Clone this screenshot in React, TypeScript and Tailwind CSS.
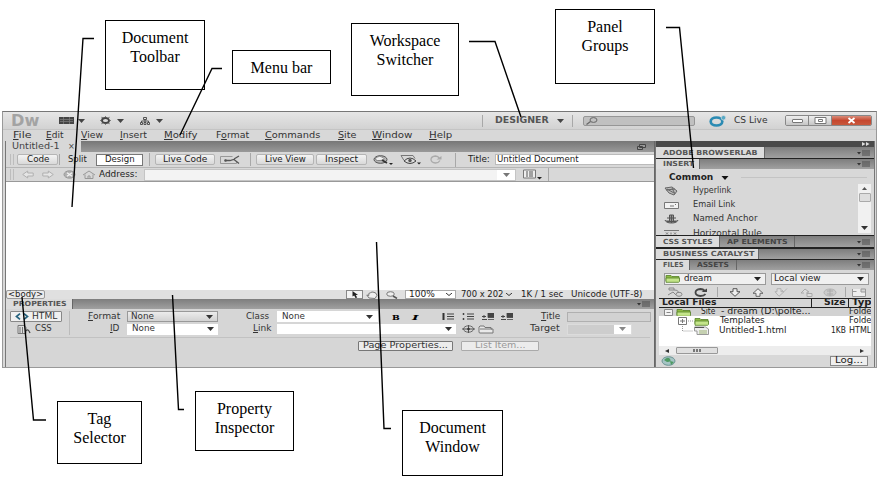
import React, { useLayoutEffect, useRef, useState } from 'react';
import clsx from 'clsx';

interface FitProps {
  w: number;
  children: React.ReactNode;
  className?: string;
}

// Stretches a label horizontally so that it fills exactly w pixels
const Fit: React.FC<FitProps> = ({ w, children, className }) => {
  const ref = useRef<HTMLSpanElement>(null);
  const [scale, setScale] = useState(1);

  useLayoutEffect(() => {
    if (ref.current) setScale(w / ref.current.offsetWidth);
  }, [w]);

  return (
    <span className={clsx('block shrink-0 leading-[10px]', className)} style={{ width: w }}>
      <span
        ref={ref}
        className="inline-block origin-left whitespace-pre align-top"
        style={{ transform: `scaleX(${scale})` }}
      >
        {children}
      </span>
    </span>
  );
};

const Caret = ({ className }: { className?: string }) => (
  <svg className={clsx('h-[4px] w-[7px] shrink-0', className)} viewBox="0 0 7 4">
    <path d="M0 0h7L3.5 4z" fill="currentColor" />
  </svg>
);

const Divider = ({ className }: { className?: string }) => (
  <div className={clsx('w-px shrink-0 bg-[#a8a8a8]', className)} />
);

const Grip = () => (
  <div className="ml-[4px] h-[11px] w-[4px] shrink-0 border-x border-[#bdbdbd]" />
);

const Folder = ({ className }: { className?: string }) => (
  <svg className={clsx('h-[9px] w-[16px] shrink-0', className)} viewBox="0 0 16 9">
    <path d="M1 7V1.500h5l1 1h7V7z" fill="#8fbb45" stroke="#55802a" strokeWidth=".8" />
    <path d="M1 8.300V4h13.500v3.500l-1 .8z" fill="#c4e58a" stroke="#55802a" strokeWidth=".8" />
  </svg>
);

const PanelMenu = () => (
  <svg className="mr-[4px] ml-auto h-[6px] w-[13px] shrink-0" viewBox="0 0 13 6">
    <path d="M0 2h4L2 4.500z" fill="#333" />
    <path d="M5 1h8M5 3h8M5 5h8" stroke="#4c4c4c" strokeWidth="1" />
  </svg>
);

const TitleBar = () => (
  <div className="flex h-[17px] shrink-0 items-center bg-gradient-to-b from-[#e6e6e6] to-[#d2d2d2] text-[#444]">
    <Fit w={28} className="ml-[8px] text-[15px] font-bold text-[#a3a3a3]">Dw</Fit>
    <svg className="ml-[20px] h-[7px] w-[15px] shrink-0" viewBox="0 0 15 7">
      <path d="M0 0h15v7H0z" fill="#444" />
      <path d="M4.500 0v7M10.500 0v7M1 2.500h13M1 4.500h13" stroke="#777" strokeWidth=".8" />
    </svg>
    <Caret className="ml-[4px]" />
    <svg className="ml-[15px] h-[9px] w-[11px] shrink-0" viewBox="0 0 11 9">
      <ellipse cx="5.500" cy="4.500" rx="3.500" ry="2.500" fill="none" stroke="#444" strokeWidth="1.900" />
      <path d="M5.500 .3v1.500M5.500 7.200v1.500M.3 4.500h1.500M9.200 4.500h1.500M1.500 1.300l1.500 1M8 6.700l1.500 1M9.500 1.300L8 2.300M3 6.700l-1.500 1" stroke="#555" />
    </svg>
    <Caret className="ml-[6px]" />
    <svg className="ml-[16px] h-[8px] w-[10px] shrink-0" viewBox="0 0 10 8">
      <path d="M3.500.5h3v2h-3zM.5 5.500h2v2h-2zM4 5.500h2v2H4zM7.500 5.500h2v2h-2zM5 2.500v3M1.500 5.500V4h7v1.500" fill="none" stroke="#444" strokeWidth=".9" />
    </svg>
    <Caret className="ml-[6px]" />
    <Divider className="ml-[319px] h-[12px]" />
    <Fit w={54} className="ml-[12px] font-bold text-[#555]">DESIGNER</Fit>
    <Caret className="ml-[8px] h-[3px]" />
    <Divider className="ml-[8px] h-[12px]" />
    <div className="ml-[10px] flex h-[10px] w-[112px] shrink-0 items-center rounded-[2px] border border-[#969696] bg-[#c0c0c0]">
      <svg className="ml-[1px] h-[8px] w-[13px]" viewBox="0 0 13 8">
        <ellipse cx="8.500" cy="3" rx="3.500" ry="2.400" fill="none" stroke="#666" />
        <path d="M5.500 4.600L1.500 7.500" stroke="#666" strokeWidth="1.200" />
      </svg>
    </div>
    <svg className="ml-[14px] h-[12px] w-[18px] shrink-0" viewBox="0 0 18 12">
      <ellipse cx="7.500" cy="6.500" rx="5.800" ry="4" fill="none" stroke="#2b8bb3" strokeWidth="2.700" />
      <circle cx="14.500" cy="2.800" r="2.300" fill="#57a9c5" stroke="#dedede" strokeWidth=".7" />
    </svg>
    <Fit w={34} className="ml-[7px] text-[#333]">CS Live</Fit>
    <div className="ml-[17px] flex h-[11px] shrink-0 overflow-hidden rounded-[2px] border border-[#888] text-[#555]">
      <div className="flex w-[23px] items-center justify-center border-r border-[#888] bg-gradient-to-b from-[#eee] to-[#c5c5c5]">
        <div className="h-[4px] w-[11px] rounded-[1px] border border-[#777] bg-white" />
      </div>
      <div className="flex w-[23px] items-center justify-center border-r border-[#888] bg-gradient-to-b from-[#eee] to-[#c5c5c5]">
        <svg className="h-[7px] w-[13px]" viewBox="0 0 13 7">
          <path d="M1 .5h11v6H1z" fill="#fff" stroke="#777" />
          <path d="M4.500 2.500h4v2h-4z" fill="none" stroke="#777" />
        </svg>
      </div>
      <div className="flex w-[39px] items-center justify-center bg-gradient-to-b from-[#d98a78] via-[#c5472f] to-[#c8583c]">
        <svg className="h-[7px] w-[9px]" viewBox="0 0 9 7">
          <path d="M1.500 1l6 5M7.500 1l-6 5" stroke="#fff" strokeWidth="1.800" />
        </svg>
      </div>
    </div>
  </div>
);

const menus = [
  { key: 'F', rest: 'ile', w: 18, gap: 'ml-[10px]' },
  { key: 'E', rest: 'dit', w: 18, gap: 'ml-[15px]' },
  { key: 'V', rest: 'iew', w: 22, gap: 'ml-[17px]' },
  { key: 'I', rest: 'nsert', w: 27, gap: 'ml-[17px]' },
  { key: 'M', rest: 'odify', w: 34, gap: 'ml-[17px]' },
  { pre: 'F', key: 'o', rest: 'rmat', w: 33, gap: 'ml-[18px]' },
  { key: 'C', rest: 'ommands', w: 55, gap: 'ml-[16px]' },
  { key: 'S', rest: 'ite', w: 18, gap: 'ml-[18px]' },
  { key: 'W', rest: 'indow', w: 41, gap: 'ml-[16px]' },
  { key: 'H', rest: 'elp', w: 23, gap: 'ml-[16px]' },
];

const MenuBar = () => (
  <div className="flex h-[12px] shrink-0 items-center border-t border-[#c4c4c4] bg-[#d8d8d8] text-[#333]">
    {menus.map((m) => (
      <Fit key={m.key + m.rest} w={m.w} className={m.gap}>
        {m.pre}<u>{m.key}</u>{m.rest}
      </Fit>
    ))}
  </div>
);

const button =
  'flex shrink-0 items-center justify-center rounded-[2px] border border-[#b5b5b5] bg-gradient-to-b from-[#f4f4f4] to-[#d9d9d9] h-[11px]';

const DocumentToolbar = () => (
  <div className="flex h-[16px] shrink-0 items-center border-b border-[#b5b5b5] bg-[#d8d8d8]">
    <Grip />
    <div className={clsx(button, 'ml-[3px] w-[41px]')}><Fit w={22}>Code</Fit></div>
    <Divider className="ml-[1px] h-[11px]" />
    <Fit w={19} className="ml-[8px]">Split</Fit>
    <div className="ml-[9px] flex h-[12px] w-[47px] shrink-0 items-center justify-center border border-[#777] bg-white">
      <Fit w={30}>Design</Fit>
    </div>
    <Divider className="ml-[6px] h-[13px]" />
    <div className={clsx(button, 'ml-[5px] w-[60px]')}><Fit w={44}>Live Code</Fit></div>
    <svg className="ml-[5px] h-[10px] w-[22px] shrink-0" viewBox="0 0 22 10">
      <path d="M.5 1.500h12M.5 1.500v7h16v-2" fill="none" stroke="#999" />
      <path d="M5 5.500h5l5-1.500M14 4l5-3M14 4.500l5 4" fill="none" stroke="#555" strokeWidth="1.300" />
      <circle cx="5.500" cy="5.500" r="1.300" fill="#555" />
    </svg>
    <Divider className="ml-[8px] h-[13px]" />
    <div className={clsx(button, 'ml-[5px] w-[58px]')}><Fit w={41}>Live View</Fit></div>
    <div className={clsx(button, 'ml-[2px] w-[51px]')}><Fit w={33}>Inspect</Fit></div>
    <svg className="ml-[6px] h-[10px] w-[20px] shrink-0" viewBox="0 0 20 10">
      <ellipse cx="7.500" cy="4.500" rx="6.500" ry="3.800" fill="#b7b7b7" stroke="#555" />
      <path d="M3 2.500q4-2.500 7 0t-3 3-4-3" fill="#eee" stroke="#666" strokeWidth=".7" />
      <path d="M9 5l5 3" stroke="#333" strokeWidth="1.800" />
      <path d="M16 8h4l-2 2z" fill="#222" />
    </svg>
    <svg className="ml-[7px] h-[11px] w-[21px] shrink-0" viewBox="0 0 21 11">
      <path d="M4 6.500L1 1.500h12l2 3" fill="none" stroke="#777" />
      <path d="M4 7q6-6 12 0-6 5-12 0z" fill="#ddd" stroke="#444" />
      <circle cx="10" cy="6.500" r="1.700" fill="#555" />
      <path d="M17 8.500h4l-2 2z" fill="#222" />
    </svg>
    <svg className="ml-[9px] h-[9px] w-[12px] shrink-0" viewBox="0 0 12 9">
      <path d="M10 5.500Q8.500 8 5.500 8 1 7.500 1 4.500T5.500 1Q8 1 9.500 3.300" fill="none" stroke="#aaa" strokeWidth="1.300" />
      <path d="M11.500 1v3.500h-5z" fill="#aaa" />
    </svg>
    <Divider className="ml-[13px] h-[14px]" />
    <Fit w={22} className="ml-[12px]">Title:</Fit>
    <div className="ml-[5px] flex h-[11px] flex-1 items-center border border-r-0 border-[#bbb] bg-white pl-[1px]">
      <Fit w={82}>Untitled Document</Fit>
    </div>
  </div>
);

const AddressBar = () => (
  <div className="flex h-[14px] shrink-0 items-center border-b border-[#999] bg-[#d8d8d8]">
    <Grip />
    <svg className="ml-[8px] h-[9px] w-[12px] shrink-0" viewBox="0 0 12 9">
      <path d="M.7 4.500l5-3.500v2h5.500v3H5.700v2z" fill="#e5e5e5" stroke="#b0b0b0" />
    </svg>
    <svg className="ml-[8px] h-[9px] w-[12px] shrink-0" viewBox="0 0 12 9">
      <path d="M11.300 4.500l-5-3.500v2H.8v3h5.500v2z" fill="#e5e5e5" stroke="#b0b0b0" />
    </svg>
    <svg className="ml-[9px] h-[9px] w-[13px] shrink-0" viewBox="0 0 13 9">
      <ellipse cx="6.500" cy="4.500" rx="5.500" ry="3.700" fill="#b0b0b0" stroke="#999" />
      <path d="M4 2.700l5 3.600M9 2.700L4 6.300" stroke="#f3f3f3" strokeWidth="1.400" />
    </svg>
    <svg className="ml-[6px] h-[9px] w-[14px] shrink-0" viewBox="0 0 14 9">
      <path d="M1 5l6-4 6 4M3 4.500v4h8v-4M6 8.500V6h2v2.500" fill="none" stroke="#999" />
    </svg>
    <Fit w={39} className="ml-[3px]">Address:</Fit>
    <div className="ml-[6px] flex h-[12px] w-[372px] shrink-0 items-center justify-end border border-[#c4c4c4] bg-[#f3f3f3]">
      <div className="flex h-full w-[18px] items-center justify-center bg-white">
        <Caret className="h-[2px] w-[5px] text-[#777]" />
      </div>
    </div>
    <svg className="ml-[7px] h-[11px] w-[19px] shrink-0" viewBox="0 0 19 11">
      <path d="M.5 1h12v8H.5z" fill="#eee" stroke="#777" />
      <path d="M3 3h2M3 5h2M3 7h2M6 3h4M6 5h4M6 7h4" stroke="#555" />
      <path d="M14 8h5l-2.500 2.500z" fill="#222" />
    </svg>
    <Divider className="ml-[6px] h-[13px] bg-[#888]" />
  </div>
);

const TagBar = () => (
  <div className="flex h-[9px] shrink-0 items-center bg-[#e0e0e0] text-[#222]">
    <div className="flex h-[9px] w-[39px] shrink-0 items-center justify-center rounded-[2px] border border-[#999] bg-[#ececec]">
      <Fit w={35}>&lt;body&gt;</Fit>
    </div>
    <div className="ml-[301px] flex h-[9px] w-[17px] shrink-0 items-center justify-center border border-[#888] bg-[#f3f3f3]">
      <svg className="h-[7px] w-[8px]" viewBox="0 0 8 7">
        <path d="M1.500 0l5.500 4H4.700l1.500 2.500-1.700.5L3.200 4.500l-1.700 1z" fill="#222" />
      </svg>
    </div>
    <svg className="ml-[3px] h-[8px] w-[13px] shrink-0" viewBox="0 0 13 8">
      <path d="M3 7L.8 4l2 .5V2.500l1.700-.8L6 1l2 .3 2 1 1 2-2 3.200z" fill="#eee" stroke="#777" />
    </svg>
    <svg className="ml-[7px] h-[8px] w-[12px] shrink-0" viewBox="0 0 12 8">
      <ellipse cx="4.500" cy="3" rx="3.800" ry="2.300" fill="#eee" stroke="#777" />
      <path d="M7 5l4 2.500" stroke="#555" strokeWidth="1.500" />
    </svg>
    <div className="ml-[7px] flex h-[9px] w-[51px] shrink-0 items-center border border-[#aaa] bg-white pl-[3px]">
      <Fit w={26}>100%</Fit>
      <svg className="ml-[11px] h-[3px] w-[6px]" viewBox="0 0 6 3"><path d="M0 0l3 2.500L6 0" fill="none" stroke="#333" /></svg>
    </div>
    <Fit w={42} className="ml-[5px]">700 x 202</Fit>
    <svg className="ml-[3px] h-[3px] w-[6px]" viewBox="0 0 6 3"><path d="M0 0l3 2.500L6 0" fill="none" stroke="#333" /></svg>
    <Fit w={42} className="ml-[9px]">1K / 1 sec</Fit>
    <Fit w={72} className="ml-[8px]">Unicode (UTF-8)</Fit>
  </div>
);

const ListIcon = ({ variant, className }: { variant: number; className?: string }) => (
  <svg className={clsx('h-[7px] w-[12px] shrink-0', className)} viewBox="0 0 12 7">
    {variant === 0 && <path d="M1.500 0v7" stroke="#333" strokeWidth="2" />}
    {variant === 1 && <path d="M1.500 0v2M1.500 5v2" stroke="#444" strokeWidth="1.500" />}
    {variant > 1 && <path d="M0 3.500h4M2 2v3M0 6.500h5" stroke="#444" />}
    {variant > 1 ? (
      <path d="M6 0h6v4.500H6zM6 6.500h6" fill="#444" stroke="#444" strokeWidth=".8" />
    ) : (
      <path d="M5 1h7M5 3.500h7M5 6h7" stroke="#444" />
    )}
  </svg>
);

const PropertyInspector = () => (
  <div className="flex flex-1 flex-col bg-[#d6d6d6] text-[#333]">
    <div className="flex h-[14px] items-center pt-[1px]">
      <div className="ml-[4px] flex h-[11px] w-[52px] shrink-0 items-center rounded-[1px] border border-[#888] bg-[#f0f0f0] pl-[4px]">
        <svg className="h-[7px] w-[14px]" viewBox="0 0 14 7">
          <path d="M5 .7L1.500 3.500 5 6.300M9 .7l3.500 2.800L9 6.300" fill="none" stroke="#26637f" strokeWidth="1.700" />
        </svg>
        <Fit w={25} className="ml-[3px]">HTML</Fit>
      </div>
      <Divider className="ml-[7px] h-[12px] bg-[#bbb]" />
      <Fit w={32} className="ml-[18px]"><u>F</u>ormat</Fit>
      <div className="ml-[7px] flex h-[11px] w-[91px] shrink-0 items-center border border-[#999] bg-gradient-to-b from-[#ececec] to-[#d2d2d2] pl-[3px]">
        <Fit w={23}>None</Fit>
        <Caret className="mr-[4px] ml-auto h-[3px]" />
      </div>
      <Fit w={23} className="ml-[28px]">Class</Fit>
      <div className="ml-[8px] flex h-[11px] w-[101px] shrink-0 items-center bg-white pl-[5px]">
        <Fit w={23}>None</Fit>
        <Caret className="mr-[5px] ml-auto h-[3px]" />
      </div>
      <Fit w={8} className="ml-[14px] font-[DejaVu_Serif] font-black text-black">B</Fit>
      <Fit w={7} className="ml-[12px] font-[DejaVu_Serif] font-bold text-black italic">I</Fit>
      <ListIcon variant={0} className="ml-[23px]" />
      <ListIcon variant={1} className="ml-[8px]" />
      <ListIcon variant={2} className="ml-[8px]" />
      <ListIcon variant={3} className="ml-[7px]" />
      <Fit w={19} className="ml-[28px]"><u>T</u>itle</Fit>
      <div className="ml-[7px] h-[10px] w-[84px] shrink-0 border border-[#b0b0b0] bg-[#d2d2d2]" />
    </div>
    <div className="flex h-[12px] items-center">
      <svg className="ml-[11px] h-[9px] w-[15px] shrink-0" viewBox="0 0 15 9">
        <path d="M1 .5h6l2 2v6H1zM3 2v6M5.500 2v6" fill="#ddd" stroke="#777" />
        <path d="M9 6q2-3 4 2" fill="none" stroke="#444" strokeWidth="1.300" />
      </svg>
      <Fit w={17} className="ml-[3px]">CSS</Fit>
      <Divider className="ml-[17px] h-[12px] bg-[#bbb]" />
      <Fit w={10} className="ml-[40px]"><u>I</u>D</Fit>
      <div className="ml-[7px] flex h-[11px] w-[91px] shrink-0 items-center bg-white pl-[5px]">
        <Fit w={23}>None</Fit>
        <Caret className="mr-[4px] ml-auto h-[3px]" />
      </div>
      <Fit w={18} className="ml-[35px]"><u>L</u>ink</Fit>
      <div className="ml-[6px] flex h-[10px] w-[179px] shrink-0 items-center bg-white">
        <Caret className="mr-[4px] ml-auto h-[3px]" />
      </div>
      <svg className="ml-[6px] h-[8px] w-[13px] shrink-0" viewBox="0 0 13 8">
        <ellipse cx="6.500" cy="4" rx="5" ry="3.200" fill="none" stroke="#666" />
        <path d="M0 4h13M6.500 0v8" stroke="#555" />
        <circle cx="6.500" cy="4" r="1.300" fill="#333" />
      </svg>
      <svg className="ml-[3px] h-[9px] w-[16px] shrink-0" viewBox="0 0 16 9">
        <path d="M1 7.500V2l1-1h4l1 1.500h6V4h2v4H2zM2 4h12" fill="#e9e9e9" stroke="#777" />
      </svg>
      <Fit w={30} className="ml-[36px]">Target</Fit>
      <div className="ml-[7px] flex h-[11px] w-[65px] shrink-0 items-center justify-end border border-[#dcdcdc] bg-[#cdcdcd]">
        <div className="flex h-full w-[17px] items-center justify-center bg-white">
          <Caret className="h-[2px] w-[5px] text-[#888]" />
        </div>
      </div>
    </div>
    <div className="mx-[4px] mt-[2px] h-px bg-[#c2c2c2]" />
    <div className="mt-[2px] flex h-[11px] items-center">
      <div className="ml-[352px] flex h-[10px] w-[95px] shrink-0 items-center justify-center rounded-[1px] border border-[#777] bg-[#ececec]">
        <Fit w={85}>Page Properties...</Fit>
      </div>
      <div className="ml-[8px] flex h-[10px] w-[78px] shrink-0 items-center justify-center rounded-[1px] border border-[#aaa] bg-[#ececec] text-[#999]">
        <Fit w={50}>List Item...</Fit>
      </div>
    </div>
  </div>
);

interface TabStripProps {
  tabs: { label: string; w: number; text: number }[];
  className?: string;
}

const TabStrip: React.FC<TabStripProps> = ({ tabs, className }) => (
  <div className={clsx('flex shrink-0 items-stretch bg-gradient-to-b from-[#7e7e7e] to-[#a0a0a0] text-[7px] font-bold', className)}>
    {tabs.map((tab, i) => (
      <div
        key={tab.label}
        className={clsx(
          'flex shrink-0 items-center border-r border-[#666] pl-[7px]',
          i === 0 ? 'bg-[#dcdcdc] text-[#555]' : 'text-[#444]'
        )}
        style={{ width: tab.w }}
      >
        <Fit w={tab.text}>{tab.label}</Fit>
      </div>
    ))}
    <div className="flex flex-1 items-center"><PanelMenu /></div>
  </div>
);

const insertItems = [
  {
    label: 'Hyperlink', w: 38,
    icon: <path d="M1 2l7-1 5 4-3 4-5-2zM3 3l7 4M2 4l9-1M8 2l3 6" fill="#bbb" stroke="#666" />,
  },
  {
    label: 'Email Link', w: 42,
    icon: <path d="M.5 2.500h14v6H.5zM6 6h4M11 4.500h1" fill="#f2f2f2" stroke="#777" />,
  },
  {
    label: 'Named Anchor', w: 64,
    icon: <path d="M5.500 1h4v6h-4zM3 4h9M1 6q1 3 6.500 3T14 6M7.500 1v8M3 7.500h9" fill="#999" stroke="#555" />,
  },
  {
    label: 'Horizontal Rule', w: 69,
    icon: <path d="M0 1.500h15M0 8h15M2 3.500l2 2M4 3.500l-2 2M7 3.500v2M10 3.500l2 2M12 3.500l-2 2" fill="none" stroke="#777" />,
  },
];

const InsertPanel = () => (
  <div className="flex h-[66px] shrink-0 flex-col overflow-hidden bg-[#d8d8d8] text-[#333]">
    <div className="flex h-[15px] shrink-0 items-center pt-[2px]">
      <Fit w={44} className="ml-[13px] font-bold text-[#222]">Common</Fit>
      <Caret className="ml-[8px] h-[4px] w-[8px] text-[#111]" />
      <div className="ml-[12px] h-px w-[126px] bg-[#c4c4c4]" />
    </div>
    <div className="flex min-h-0 flex-1">
      <div className="flex flex-1 flex-col overflow-hidden">
        {insertItems.map((item) => (
          <div key={item.label} className="flex h-[14.200px] shrink-0 items-center">
            <svg className="ml-[8px] h-[10px] w-[15px] shrink-0" viewBox="0 0 15 10">{item.icon}</svg>
            <Fit w={item.w} className="ml-[14px]">{item.label}</Fit>
          </div>
        ))}
      </div>
      <div className="mr-[3px] flex h-[49px] w-[13px] flex-col items-center bg-[#f1f1f1] py-[3px]">
        <svg className="h-[3px] w-[5px]" viewBox="0 0 5 3"><path d="M0 3l2.500-3L5 3z" fill="#555" /></svg>
        <div className="mt-[3px] h-[9px] w-[12px] rounded-[1px] border border-[#aaa] bg-[#dedede]" />
        <Caret className="mt-auto h-[3px] w-[5px] text-[#333]" />
      </div>
    </div>
  </div>
);

const FilesPanel = () => (
  <div className="flex flex-1 flex-col bg-[#d8d8d8] text-[#222]">
    <div className="flex h-[16px] shrink-0 items-center pt-[1px]">
      <div className="ml-[8px] flex h-[12px] w-[102px] items-center border border-[#999] bg-[#f0f0f0]">
        <Folder />
        <Fit w={28} className="ml-[3px]">dream</Fit>
        <Caret className="mr-[4px] ml-auto h-[3px]" />
      </div>
      <div className="ml-[5px] flex h-[12px] w-[98px] items-center border border-[#999] bg-[#f0f0f0] pl-[2px]">
        <Fit w={47}>Local view</Fit>
        <Caret className="mr-[4px] ml-auto h-[3px]" />
      </div>
    </div>
    <div className="flex h-[12px] shrink-0 items-center">
      <svg className="ml-[11px] h-[10px] w-[16px] shrink-0" viewBox="0 0 16 10">
        <path d="M2 1h5v2H2zM1 8l5-3 3 3M7 3q5 0 4 3" fill="none" stroke="#888" />
        <ellipse cx="12" cy="7.300" rx="3" ry="2" fill="none" stroke="#888" />
      </svg>
      <svg className="ml-[11px] h-[9px] w-[14px] shrink-0" viewBox="0 0 14 9">
        <path d="M11.500 6Q10 8 6.500 8 1.500 7.500 1.500 4.500T6.500 1Q9 1 11 3" fill="none" stroke="#444" strokeWidth="1.800" />
        <path d="M13 .5V4H7.500z" fill="#444" />
      </svg>
      <Divider className="ml-[9px] h-[10px] bg-[#999]" />
      <svg className="ml-[11px] h-[9px] w-[12px] shrink-0" viewBox="0 0 12 9">
        <path d="M4 .7h4v3h3L6 8.300 1 3.700h3z" fill="#eee" stroke="#555" />
      </svg>
      <svg className="ml-[11px] h-[9px] w-[12px] shrink-0" viewBox="0 0 12 9">
        <path d="M4 8.300h4v-3h3L6 .7 1 5.300h3z" fill="#eee" stroke="#666" />
      </svg>
      <svg className="ml-[10px] h-[9px] w-[14px] shrink-0" viewBox="0 0 14 9">
        <path d="M3 .7h4v3h3L5 8.300 1 3.700h2zM8 2l1.500 2L13 .5" fill="#ddd" stroke="#b2b2b2" />
      </svg>
      <svg className="ml-[12px] h-[9px] w-[13px] shrink-0" viewBox="0 0 13 9">
        <path d="M4 5H1L5 1l4 3H7v2M7 5.500h5v3H7z" fill="#ddd" stroke="#aaa" />
      </svg>
      <svg className="ml-[10px] h-[9px] w-[14px] shrink-0" viewBox="0 0 14 9">
        <ellipse cx="7" cy="4.500" rx="6" ry="3.500" fill="#ccc" stroke="#b2b2b2" />
        <path d="M4 3h6M4 6h6M7 1v7" stroke="#aaa" />
      </svg>
      <Divider className="ml-[8px] h-[10px] bg-[#999]" />
      <svg className="ml-[6px] h-[9px] w-[14px] shrink-0" viewBox="0 0 14 9">
        <path d="M.5 1v7.500h13V1M.5 3.500h4M9 1h4.500v3H9z" fill="#eee" stroke="#999" />
      </svg>
    </div>
    <div className="mr-[3px] ml-[3px] flex min-h-0 flex-1 flex-col overflow-hidden">
      <div className="flex h-[10px] shrink-0 items-center border-y border-[#222] bg-[#d6d6d6] font-bold text-[#222]">
        <Fit w={54} className="ml-[3px]">Local Files</Fit>
        <div className="ml-[95px] h-full w-px bg-[#222]" />
        <Fit w={22} className="ml-[12px]">Size</Fit>
        <div className="ml-[2px] h-full w-px bg-[#222]" />
        <Fit w={19} className="ml-[3px]">Typ</Fit>
      </div>
      <div className="flex h-[8px] shrink-0 items-center bg-[#d2d2d2]">
        <svg className="ml-[5px] h-[7px] w-[9px]" viewBox="0 0 9 7"><path d="M.5.5h8v6h-8zM2.500 3.500h4" fill="#f3f3f3" stroke="#888" /></svg>
        <Folder className="ml-[3px]" />
        <Fit w={14} className="ml-[9px]">Site</Fit>
        <Fit w={89} className="ml-[6px]">- dream (D:\polte...</Fit>
        <Fit w={22} className="ml-auto">Folde</Fit>
      </div>
      <div className="flex flex-1 flex-col bg-white">
        <div className="flex h-[10px] items-center">
          <svg className="ml-[19px] h-[8px] w-[16px]" viewBox="0 0 16 8">
            <path d="M.5.5h8v7h-8zM2 4h5M4.500 2v4" fill="#fff" stroke="#777" />
            <path d="M10 4h6" stroke="#999" strokeDasharray="1 1" />
          </svg>
          <Folder />
          <Fit w={45} className="ml-[10px]">Templates</Fit>
          <Fit w={22} className="ml-auto">Folde</Fit>
        </div>
        <div className="flex h-[9px] items-center">
          <svg className="ml-[23px] h-[9px] w-[12px]" viewBox="0 0 12 9"><path d="M.5 0v5h11" fill="none" stroke="#999" strokeDasharray="1 1" /></svg>
          <svg className="h-[9px] w-[15px]" viewBox="0 0 15 9">
            <path d="M.5 1h11l3 2v5.500H3V5H.5z" fill="#eee" stroke="#999" />
            <path d="M1 1.500h9" stroke="#555" />
            <path d="M5 5h8M5 7h8" stroke="#9db374" />
          </svg>
          <Fit w={67} className="ml-[10px]">Untitled-1.html</Fit>
          <Fit w={15} className="ml-auto">1KB</Fit>
          <Fit w={22} className="ml-[3px]">HTML</Fit>
        </div>
      </div>
      <div className="flex h-[9px] shrink-0 items-center bg-[#ededed]">
        <svg className="ml-[6px] h-[4px] w-[4px]" viewBox="0 0 4 4"><path d="M4 0v4L0 2z" fill="#333" /></svg>
        <div className="ml-[7px] flex h-[7px] w-[42px] items-center justify-center gap-px rounded-[1px] border border-[#999] bg-[#e0e0e0]">
          <div className="h-[3px] w-[2px] bg-[#777]" />
          <div className="h-[3px] w-[2px] bg-[#777]" />
          <div className="h-[3px] w-[2px] bg-[#777]" />
        </div>
        <svg className="mr-[7px] ml-auto h-[4px] w-[4px]" viewBox="0 0 4 4"><path d="M0 0v4l4-2z" fill="#333" /></svg>
      </div>
    </div>
    <div className="flex h-[12px] shrink-0 items-center">
      <svg className="ml-[5px] h-[10px] w-[15px]" viewBox="0 0 15 10">
        <ellipse cx="7.500" cy="5" rx="6.500" ry="4.300" fill="#a5c4c4" stroke="#6c9494" />
        <path d="M3 4q4-4 6-1t-3 3zM9 5l4 1-3 3z" fill="#4e9a62" />
      </svg>
      <div className="mr-[6px] ml-auto flex h-[10px] w-[38px] items-center justify-center border border-[#888] bg-[#efefef]">
        <Fit w={28}>Log...</Fit>
      </div>
    </div>
  </div>
);

const PanelGroups = () => (
  <div className="flex w-[220px] shrink-0 flex-col border-x border-[#777] bg-[#222]">
    <div className="flex h-[6px] shrink-0 items-center justify-end bg-[#4a4a4a] pr-[4px]">
      <svg className="h-[4px] w-[8px]" viewBox="0 0 8 4"><path d="M0 0l3.500 2L0 4zM4 0l3.500 2L4 4z" fill="#ddd" /></svg>
    </div>
    <TabStrip className="h-[11px]" tabs={[{ label: 'ADOBE BROWSERLAB', w: 109, text: 95 }]} />
    <TabStrip className="mt-px h-[10px]" tabs={[{ label: 'INSERT', w: 44, text: 31 }]} />
    <InsertPanel />
    <TabStrip
      className="mt-px h-[11px]"
      tabs={[{ label: 'CSS STYLES', w: 64, text: 50 }, { label: 'AP ELEMENTS', w: 75, text: 60 }]}
    />
    <TabStrip className="mt-[2px] h-[10px]" tabs={[{ label: 'BUSINESS CATALYST', w: 103, text: 91 }]} />
    <TabStrip
      className="mt-px h-[10px]"
      tabs={[{ label: 'FILES', w: 34, text: 21 }, { label: 'ASSETS', w: 47, text: 32 }]}
    />
    <FilesPanel />
  </div>
);

const callouts = [
  { lines: ['Document', 'Toolbar'], box: 'left-[105px] top-[20px] w-[100px] h-[70px]' },
  { lines: ['Menu bar'], box: 'left-[232px] top-[50px] w-[99px] h-[34px]' },
  { lines: ['Workspace', 'Switcher'], box: 'left-[351px] top-[23px] w-[108px] h-[73px]' },
  { lines: ['Panel', 'Groups'], box: 'left-[555px] top-[9px] w-[100px] h-[75px]' },
  { lines: ['Tag', 'Selector'], box: 'left-[57px] top-[401px] w-[85px] h-[63px]' },
  { lines: ['Property', 'Inspector'], box: 'left-[195px] top-[391px] w-[99px] h-[60px]' },
  { lines: ['Document', 'Window'], box: 'left-[402px] top-[410px] w-[101px] h-[66px]' },
];

const Callouts = () => (
  <>
    {callouts.map((c) => (
      <div
        key={c.lines.join(' ')}
        className={clsx(
          'absolute border border-black pt-[8px] text-center font-["Liberation_Serif",serif] text-[16px] leading-[18.700px] text-black',
          c.box
        )}
      >
        {c.lines.map((line) => <div key={line}>{line}</div>)}
      </div>
    ))}
    <svg className="pointer-events-none absolute inset-0" width="878" height="478" viewBox="0 0 878 478">
      <g fill="none" stroke="#000" strokeWidth="1.400">
        <path d="M94 38.500H83L72 207" />
        <path d="M222 68.500H212L180 135" />
        <path d="M469 41.500H495L521 117" />
        <path d="M666 27.500H679.500L693.500 168" />
        <path d="M46 420H33.500L22 297" />
        <path d="M184 409.500H178.500L172.500 295" />
        <path d="M391 428.500H384L376.500 242" />
      </g>
    </svg>
  </>
);

const App: React.FC = () => {
  return (
    <div className='relative h-[478px] w-[878px] overflow-hidden bg-white pt-[111px] font-["DejaVu_Sans",sans-serif] text-[8px] text-[#222]'>
      <div className="ml-[2px] flex h-[257px] w-[875px] flex-col border border-[#999] border-t-[#777] bg-[#d8d8d8]">
        <TitleBar />
        <MenuBar />
        <div className="flex min-h-0 flex-1">
          <div className="ml-[2px] flex w-[649px] shrink-0 flex-col border-l border-[#777]">
            <div className="flex h-[11px] shrink-0 items-center bg-gradient-to-b from-[#777] to-[#999]">
              <div className="flex h-full w-[75px] items-center bg-[#d8d8d8] pl-[6px]">
                <Fit w={48} className="text-[#444]">Untitled-1</Fit>
                <Fit w={7} className="ml-[8px] text-[#444]">×</Fit>
              </div>
              <svg className="mr-[8px] ml-auto h-[6px] w-[9px]" viewBox="0 0 9 6">
                <path d="M2.500.5h6v3h-6zM.5 2.500h5v3h-5z" fill="#999" stroke="#444" />
              </svg>
            </div>
            <DocumentToolbar />
            <AddressBar />
            <div className="flex-1 bg-white" />
            <TagBar />
            <TabStrip className="h-[10px]" tabs={[{ label: 'PROPERTIES', w: 67, text: 54 }]} />
            <div className="flex h-[58px] shrink-0"><PropertyInspector /></div>
          </div>
          <div className="w-[1px] shrink-0 bg-[#666]" />
          <PanelGroups />
        </div>
      </div>
      <Callouts />
    </div>
  );
};

export default App;
